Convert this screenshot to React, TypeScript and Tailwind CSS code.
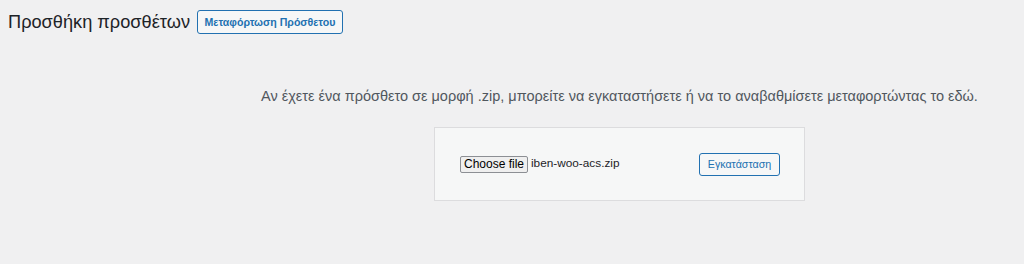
import React from "react";

const App: React.FC = () => {
  return (
    <div className="w-[1024px] h-[264px] bg-[#f0f0f1] font-['Liberation_Sans',_Arial,_sans-serif] text-[#1d2327] overflow-hidden">
      {/* Header */}
      <div className="flex items-center pl-[8px] pt-[10px]">
        <h1 className="text-[18.2px] leading-[24px] font-normal">Προσθήκη προσθέτων</h1>
        <button className="ml-[7px] h-[24px] w-[146px] border border-[#2271b1] rounded-[3px] bg-[#f6f7f7] text-[#2271b1] text-[10.6px] font-semibold leading-none">
          Μεταφόρτωση Πρόσθετου
        </button>
      </div>

      {/* Upload area */}
      <div className="pl-[215px] flex flex-col items-center">
        <p className="mt-[52px] text-[14.5px] leading-[20px] text-[#50575e]">
          Αν έχετε ένα πρόσθετο σε μορφή .zip, μπορείτε να εγκαταστήσετε ή να το αναβαθμίσετε μεταφορτώντας το εδώ.
        </p>
        <div className="mt-[21px] w-[371px] h-[74px] bg-[#f6f7f7] border border-[#dcdcde] flex items-center justify-between pl-[25px] pr-[24px]">
          <div className="flex items-center text-[#1d2327]">
            <span className="h-[17px] w-[68px] flex items-center justify-center border border-[#8c8f94] rounded-[2px] bg-[#efefef] text-[12px] leading-none text-black">
              Choose file
            </span>
            <span className="ml-[3px] text-[11.8px] text-[#1d2327]">iben-woo-acs.zip</span>
          </div>
          <button className="h-[23px] w-[81px] border border-[#2271b1] rounded-[3px] bg-[#f6f7f7] text-[#2271b1] text-[10.7px] leading-none">
            Εγκατάσταση
          </button>
        </div>
      </div>
    </div>
  );
};

export default App;
